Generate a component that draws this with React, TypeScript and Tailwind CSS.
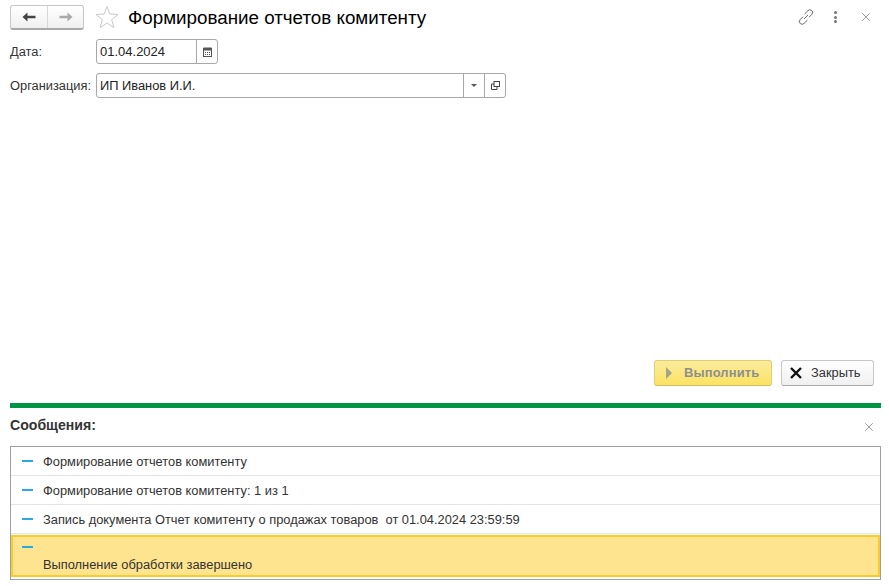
// 1C form: report generation with messages panel
import { X } from 'lucide-react';

const messages = [
  'Формирование отчетов комитенту',
  'Формирование отчетов комитенту: 1 из 1',
  'Запись документа Отчет комитенту о продажах товаров  от 01.04.2024 23:59:59',
];

const Dash = () => <div className="w-[11px] h-[2px] bg-[#29abe2] shrink-0" />;

export default function App() {
  return (
    <div className="w-[889px] h-[586px] bg-white flex flex-col overflow-hidden font-['Liberation_Sans',Arial,sans-serif] text-[12.85px] text-[#333]">
      {/* Header */}
      <div className="flex items-center h-[24px] mt-[5px] ml-[10px] mr-[16px]">
        <div className="flex w-[74px] h-[25px] rounded-[3px] border border-[#c8c8c8] border-b-[#a8a8a8] border-b-2 bg-gradient-to-b from-white to-[#f0f0f0]">
          <div className="w-[38px] flex items-center justify-center border-r border-[#d8d8d8]">
            <svg width="14" height="10" viewBox="0 0 14 10"><path d="M0.5 5 L5.5 0.5 V3.7 H13.5 V6.3 H5.5 V9.5 Z" fill="#444" /></svg>
          </div>
          <div className="w-[35px] flex items-center justify-center">
            <svg width="14" height="10" viewBox="0 0 14 10"><path d="M13.5 5 L8.5 0.5 V3.7 H0.5 V6.3 H8.5 V9.5 Z" fill="#aaa" /></svg>
          </div>
        </div>
        <svg className="ml-[11px]" width="24" height="24" viewBox="0 0 24 24">
          <path d="M12 1.5 L14.9 9 L23 9.5 L16.7 14.6 L18.8 22.5 L12 18.1 L5.2 22.5 L7.3 14.6 L1 9.5 L9.1 9 Z" fill="#fff" stroke="#c9c9c9" strokeWidth="1" />
        </svg>
        <div className="ml-[9px] mt-[2px] text-[18.8px] leading-[24px] text-black">Формирование отчетов комитенту</div>
        <div className="ml-auto flex items-center">
          <svg width="16" height="16" viewBox="0 0 16 16" fill="none" stroke="#666" strokeWidth="1">
            <path d="M6.5 5 L9.8 1.8 A2.4 2.4 0 0 1 14 5.2 L11 8.2" />
            <path d="M9.5 11 L6.2 14.2 A2.4 2.4 0 0 1 2 10.8 L5 7.8" />
            <path d="M6 10 L10 6" />
          </svg>
          <div className="ml-[20px] w-[3px] flex flex-col gap-[1.5px]">
            <div className="w-[3px] h-[3px] bg-[#777] rounded-full" />
            <div className="w-[3px] h-[3px] bg-[#777] rounded-full" />
            <div className="w-[3px] h-[3px] bg-[#777] rounded-full" />
          </div>
          <X className="ml-[22px] text-[#555]" size={14} strokeWidth={1} />
        </div>
      </div>

      {/* Fields */}
      <div className="flex items-center h-[25px] mt-[10px] ml-[10px]">
        <div className="w-[86px]">Дата:</div>
        <div className="flex w-[122px] h-[25px] rounded-[3px] border border-[#a8a8a8]">
          <div className="flex-1 pl-[3px] leading-[23px] text-[13px] text-[#222]">01.04.2024</div>
          <div className="w-[21px] border-l border-[#a8a8a8] flex items-center justify-center">
            <svg width="9" height="10" viewBox="0 0 9 10">
              <rect x="0.5" y="1.5" width="8" height="8" fill="none" stroke="#555" />
              <rect x="0.5" y="0.5" width="8" height="3" fill="#555" />
              <path d="M2 5.5h1M4 5.5h1M6 5.5h1M2 7.5h1M4 7.5h1M6 7.5h1" stroke="#555" />
            </svg>
          </div>
        </div>
      </div>
      <div className="flex items-center h-[25px] mt-[9px] ml-[10px]">
        <div className="w-[86px]">Организация:</div>
        <div className="flex w-[410px] h-[25px] rounded-[3px] border border-[#a8a8a8]">
          <div className="flex-1 pl-[3px] leading-[23px] text-[12.85px] text-[#222]">ИП Иванов И.И.</div>
          <div className="w-[21px] border-l border-[#a8a8a8] flex items-center justify-center">
            <div className="w-0 h-0 border-l-[3px] border-r-[3px] border-t-[3px] border-l-transparent border-r-transparent border-t-[#555]" />
          </div>
          <div className="w-[21px] border-l border-[#a8a8a8] flex items-center justify-center">
            <svg width="9" height="9" viewBox="0 0 9 9" fill="none" stroke="#444">
              <rect x="3" y="0.5" width="5.5" height="5" />
              <path d="M3 3H0.5V8.5H6V6" />
            </svg>
          </div>
        </div>
      </div>

      <div className="flex-1" />

      {/* Buttons */}
      <div className="flex justify-end gap-[9px] mr-[15px]">
        <div className="w-[118px] h-[26px] rounded-[3px] border border-[#e0cf70] border-b-[#cdbd62] bg-gradient-to-b from-[#fbec9d] to-[#fbe35f] flex items-center pl-[11px] text-[#8f8f8f] font-bold">
          <div className="w-0 h-0 border-t-[6px] border-b-[6px] border-l-[6px] border-t-transparent border-b-transparent border-l-[#a3a58a]" />
          <span className="ml-[12px] text-[13px] tracking-[0.1px]">Выполнить</span>
        </div>
        <div className="w-[93px] h-[26px] rounded-[3px] border border-[#c8c8c8] border-b-[#a8a8a8] bg-gradient-to-b from-white to-[#f0f0f0] flex items-center pl-[8px]">
          <svg width="12" height="12" viewBox="0 0 12 12"><path d="M1 1 L11 11 M11 1 L1 11" stroke="#111" strokeWidth="2.4" /></svg>
          <span className="ml-[9px]">Закрыть</span>
        </div>
      </div>

      {/* Messages */}
      <div className="h-[5px] mt-[17px] ml-[10px] mr-[8px] bg-[#009646]" />
      <div className="flex items-center justify-between h-[38px] ml-[10px] mr-[13px]">
        <span className="font-bold text-[14.1px] mb-[3px]">Сообщения:</span>
        <X className="text-[#555]" size={14} strokeWidth={1} />
      </div>
      <div className="ml-[10px] mr-[8px] mb-[6px] border border-[#a0a0a0]">
        {messages.map((m) => (
          <div key={m} className="flex items-center h-[29px] border-b border-[#e4e4e4] pl-[11px]">
            <Dash />
            <span className="ml-[10px] mt-[2px] whitespace-pre">{m}</span>
          </div>
        ))}
        <div className="h-[42px] mt-[1px] mb-[2px] bg-[#fee48e] border-2 border-[#fbcb2c] pl-[9px] flex flex-col">
          <div className="mt-[9px]"><Dash /></div>
          <div className="ml-[21px] mt-[7px]">Выполнение обработки завершено</div>
        </div>
      </div>
    </div>
  );
}
